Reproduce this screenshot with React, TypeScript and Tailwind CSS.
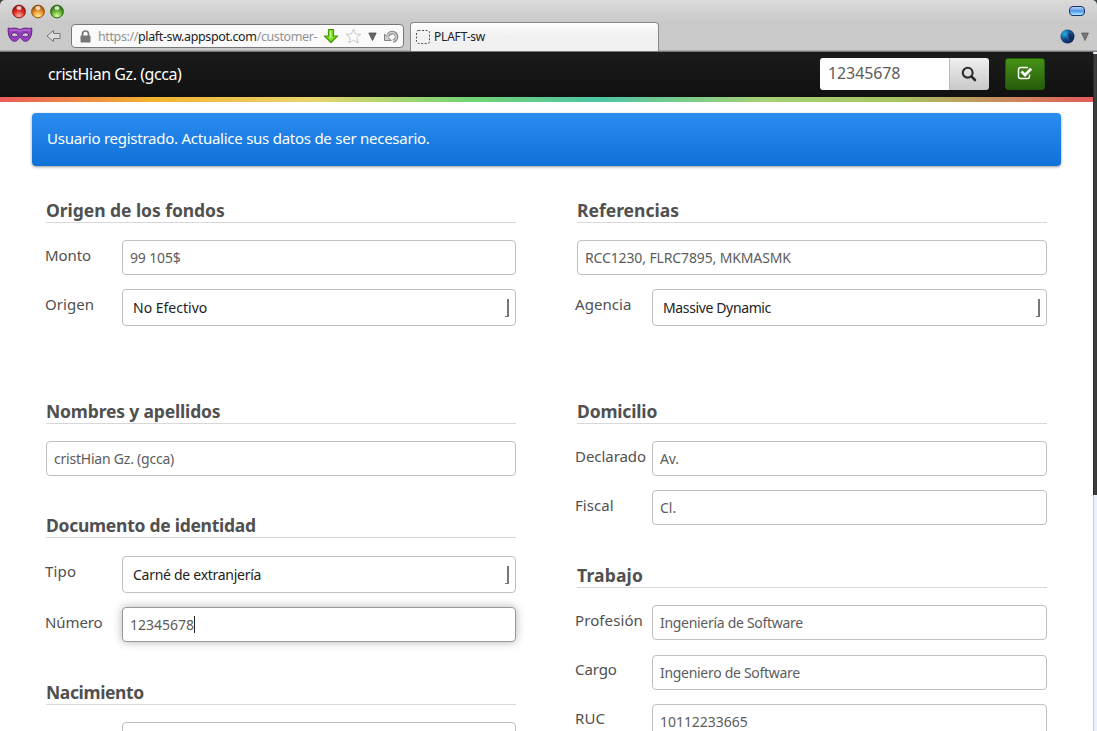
import type { ReactNode } from "react";

function Light({ id, dark, mid, light }: { id: string; dark: string; mid: string; light: string }) {
  return (
    <svg width="15" height="15" viewBox="0 0 15 15">
      <defs>
        <radialGradient id={id} cx="0.5" cy="0.85" r="0.75">
          <stop offset="0" stopColor={light} />
          <stop offset="0.55" stopColor={mid} />
          <stop offset="1" stopColor={dark} />
        </radialGradient>
      </defs>
      <circle cx="8" cy="7.5" r="6.4" fill={`url(#${id})`} stroke={dark} strokeWidth="1" />
      <ellipse cx="8" cy="4" rx="2.6" ry="1.9" fill="#fff" opacity="0.75" />
    </svg>
  );
}

function Mask() {
  return (
    <svg width="26" height="16" viewBox="0 0 26 16">
      <path
        d="M1.300 1C3 2 6 .8 9 1.200c1.700.2 2.500 1.300 4 1.300s2.300-1.100 4-1.300c3-.4 6 .8 7.700-.2.600 4-.2 8.500-2.700 11.500-2 2.300-5 2.300-6.700.3-1-1.300-1.500-2.300-2.300-2.300s-1.300 1-2.300 2.300c-1.700 2-4.700 2-6.700-.3C1.500 9.500.7 5 1.300 1z"
        fill="#9a3fc0"
        stroke="#5c2279"
        strokeWidth="1"
      />
      <path d="M2.500 3c4 .2 7-1.200 10.500 1.300C16.500 1.800 19.500 3.200 23.500 3" fill="none" stroke="#c67be0" strokeWidth="1" />
      <path d="M4.300 8c.7-3 5.500-3 7 .3-1.500 2-6 2.200-7-.3zM21.700 8c-.7-3-5.500-3-7 .3 1.500 2 6 2.200 7-.3z" fill="#cfc3d6" stroke="#4c1768" strokeWidth="1" />
    </svg>
  );
}

function Browser() {
  return (
    <header className="h-[52px] shrink-0 overflow-hidden rounded-t-[5px] border-b border-[#777] bg-[linear-gradient(#dadada,#c9c9c9_22px,#cacaca)] shadow-[inset_0_-1px_0_#aaa]">
      <div className="flex h-[22px] items-center pl-[11px] pr-[12px]">
        <div className="flex gap-[4px]">
          <Light id="lr" dark="#931510" mid="#dd332d" light="#ffb0a0" />
          <Light id="lo" dark="#965309" mid="#eb942d" light="#ffeb9e" />
          <Light id="lg" dark="#2f6812" mid="#62b331" light="#d6ff9e" />
        </div>
        <div className="ml-auto h-[10px] w-[16px] rounded-[4px] border border-[#1d2f73] bg-[linear-gradient(#b8d8fa,#4f92e6_50%,#a9f0ff)]" />
      </div>
      <div className="flex h-[30px] items-start">
        <div className="ml-[7px] mt-[5px]"><Mask /></div>
        <svg className="ml-[13px] mt-[7px]" width="15" height="14" viewBox="0 0 15 14">
          <path d="M1 7l6.500-5.500v3H14v5H7.500v3z" fill="#dedede" stroke="#777" />
        </svg>
        <div className="ml-[10px] mt-[2px] flex h-[24px] w-[333px] items-center rounded-[4px] border border-[#777] bg-[#fafafa] pl-[8px]">
          <svg className="shrink-0" width="11" height="13" viewBox="0 0 11 13">
            <path d="M2.500 6V4a3 3 0 0 1 6 0v2" fill="none" stroke="#777" strokeWidth="1.700" />
            <rect x="0.500" y="5.500" width="10" height="7" rx="1" fill="#777" />
          </svg>
          <span className="ml-[7px] w-[222px] shrink-0 whitespace-nowrap pt-px text-[12.500px] leading-[22px] tracking-[-0.380px] text-[#929292]">
            https://<span className="text-[#222]">plaft-sw.appspot.com</span>/customer-
          </span>
          <svg className="ml-[3px] shrink-0" width="16" height="16" viewBox="0 0 16 16">
            <path d="M5.500 1.500h5V8h4L8 14.500 1.500 8h4z" fill="#7be11d" stroke="#43950c" strokeWidth="1.200" strokeLinejoin="round" />
            <path d="M7.500 3v7" stroke="#c5ff7b" strokeWidth="1.500" />
          </svg>
          <svg className="ml-[6px] shrink-0" width="17" height="16" viewBox="0 0 17 16">
            <path d="M8.500 1l2 5 5.500.3-4.300 3.400 1.500 5.300-4.700-3-4.700 3 1.500-5.300L1 6.300 6.500 6z" fill="#fdfdfd" stroke="#c8c8c8" />
          </svg>
          <svg className="ml-[6px] shrink-0" width="9" height="9" viewBox="0 0 9 9">
            <path d="M.8 1h7.400L4.500 8.500z" fill="#666" stroke="#444" strokeWidth="0.700" />
          </svg>
          <svg className="ml-[7px] shrink-0" width="15" height="15" viewBox="0 0 15 15">
            <path d="M4 7.500A4.300 4.300 0 1 1 9 12" fill="none" stroke="#777" strokeWidth="3.400" />
            <path d="M.5 5.200v6.300h6.800z" fill="#d0d0d0" stroke="#777" strokeWidth="0.900" strokeLinejoin="round" />
            <path d="M3.800 8.500A4.300 4.300 0 1 1 9 12" fill="none" stroke="#cfcfcf" strokeWidth="1.800" />
          </svg>
        </div>
        <div className="ml-[6px] flex h-[30px] w-[249px] items-center rounded-t-[4px] border border-b-0 border-[#888] bg-[linear-gradient(#fff,#f1f1f1_12px)] pb-[2px] pl-[5px]">
          <svg width="14" height="14" viewBox="0 0 14 14">
            <rect x="0.500" y="0.500" width="13" height="13" rx="2" fill="none" stroke="#555" strokeDasharray="2 1.500" />
          </svg>
          <span className="ml-[4px] whitespace-nowrap text-[12px] tracking-[-0.200px] text-[#222]">PLAFT-sw</span>
        </div>
        <div className="ml-auto mr-[8px] mt-[7px] flex items-center gap-[6px]">
          <svg width="15" height="15" viewBox="0 0 15 15">
            <defs>
              <radialGradient id="globe" cx="0.300" cy="0.300" r="0.800">
                <stop offset="0" stopColor="#20afe3" />
                <stop offset="0.450" stopColor="#195998" />
                <stop offset="1" stopColor="#0c1d4d" />
              </radialGradient>
            </defs>
            <circle cx="7.500" cy="7.500" r="7" fill="url(#globe)" />
            <path d="M8 4l3 1 2 3-2 4-2-2zM4 9l3 2-1 2z" fill="#142454" opacity="0.700" />
          </svg>
          <svg width="8" height="9" viewBox="0 0 8 9">
            <path d="M.6 1h6.800L4 8.500z" fill="#777" stroke="#555" strokeWidth="0.700" />
          </svg>
        </div>
      </div>
    </header>
  );
}

function Section({ title, cls = "", tracking = "tracking-[0px]", children }: { title: string; cls?: string; tracking?: string; children: ReactNode }) {
  return (
    <section className={cls}>
      <h2 className={`h-[25px] whitespace-nowrap border-b border-[#d8d8d8] text-[17.500px] font-bold leading-[25px] text-[#505050] ${tracking}`}>{title}</h2>
      {children}
    </section>
  );
}

function Input({ value, focus, tracking = "tracking-[-0.300px]" }: { value: string; focus?: boolean; tracking?: string }) {
  return (
    <div
      className={`flex h-[35px] flex-1 items-center whitespace-nowrap rounded-[4px] border bg-white pl-[7px] text-[14px] text-[#5c5c5c] ${tracking} ${
        focus ? "border-[#999] shadow-[0_0_10px_rgba(0,0,0,0.300)]" : "border-[#bfbfbf]"
      }`}
    >
      <span>{value}</span>
      {focus && <span className="h-[17px] w-px bg-[#222]" />}
    </div>
  );
}

function Select({ value, tracking = "tracking-[-0.280px]" }: { value: string; tracking?: string }) {
  return (
    <div className={`flex h-[37px] flex-1 items-center whitespace-nowrap rounded-[4px] border border-[#bfbfbf] bg-white pl-[10px] pr-[6px] text-[14px] text-[#222] ${tracking}`}>
      <span>{value}</span>
      <span className="ml-auto h-[18px] w-[4px] border-b border-r-2 border-[#777]" />
    </div>
  );
}

function Row({
  label,
  cls,
  side = "left",
  pad = "pt-[4px]",
  tracking = "tracking-[0.050px]",
  children,
}: {
  label: string;
  cls: string;
  side?: "left" | "right";
  pad?: string;
  tracking?: string;
  children: ReactNode;
}) {
  return (
    <div className={`flex ${side === "left" ? "-ml-[1px]" : "-ml-[2px]"} ${cls}`}>
      <span className={`w-[77px] shrink-0 whitespace-nowrap text-[15px] leading-[22px] text-[#505050] ${pad} ${tracking}`}>{label}</span>
      {children}
    </div>
  );
}

export default function App() {
  return (
    <div className="h-[731px] w-[1097px] bg-[linear-gradient(#3a4440_10px,#fff_10px)]">
      <div className="flex h-[731px] w-[1097px] flex-col overflow-hidden font-['Noto_Sans','Open_Sans',sans-serif]">
        <Browser />
        <div className="flex min-h-0 flex-1">
          <main className="w-[1093px] overflow-hidden">
            <nav className="flex h-[45px] items-start bg-[linear-gradient(#1b1b1b,#111)] pl-[48px] pr-[48px]">
              <span className="whitespace-nowrap text-[16px] leading-[44px] tracking-[-0.450px] text-white">cristHian Gz. (gcca)</span>
              <div className="ml-auto mt-[6px] flex h-[32px] w-[169px] overflow-hidden rounded-[3px]">
                <div className="w-[129px] bg-white pl-[8px] text-[16px] leading-[31px] tracking-[-0.100px] text-[#5c5c5c]">12345678</div>
                <div className="flex flex-1 items-center justify-center border-l border-[#bbb] bg-[linear-gradient(#eee,#c9c9c9)] pr-px">
                  <svg width="16" height="16" viewBox="0 0 16 16">
                    <circle cx="6.700" cy="6.700" r="4.900" fill="none" stroke="#2b2b2b" strokeWidth="2.100" />
                    <path d="M10.300 10.300l3.700 3.700" stroke="#2b2b2b" strokeWidth="2.600" strokeLinecap="round" />
                  </svg>
                </div>
              </div>
              <div className="ml-[16px] mt-[6px] flex h-[32px] w-[40px] items-center justify-center rounded-[3px] border border-[#235c08] bg-[linear-gradient(#459216,#275c0b)]">
                <svg className="-mt-[2px]" width="16" height="14" viewBox="0 0 16 14">
                  <path d="M11 1.500H3.500a2 2 0 0 0-2 2v7a2 2 0 0 0 2 2h7a2 2 0 0 0 2-2V8.500" fill="none" stroke="#fff" strokeWidth="1.500" />
                  <path d="M4.500 5.500l3.500 3.500 6.200-6.200" fill="none" stroke="#fff" strokeWidth="2.700" />
                </svg>
              </div>
            </nav>
            <div className="h-[5px] bg-[linear-gradient(90deg,#eb5b5b,#f3b32e_14%,#e8d46b_28.500%,#71d374_43%,#4ec5a5_55%,#a4d173_70%,#a7c461_82%,#e55b5b)]" />
            <div className="ml-[32px] mt-[11px] h-[53px] w-[1029px] rounded-[4px] bg-[linear-gradient(#2b8cf0,#0f72d9)] pl-[15px] text-[15px] leading-[51px] tracking-[-0.250px] text-white shadow-[0_1px_3px_rgba(0,0,0,0.400)]">
              Usuario registrado. Actualice sus datos de ser necesario.
            </div>
            <div className="ml-[46px] mt-[32px] flex gap-[61px]">
              <div className="w-[470px]">
                <Section title="Origen de los fondos" tracking="tracking-[-0.050px]">
                  <Row label="Monto" cls="mt-[17px]" tracking="tracking-[-0.100px]"><Input value="99 105$" tracking="tracking-[-0.150px]" /></Row>
                  <Row label="Origen" cls="mt-[14px]"><Select value="No Efectivo" tracking="tracking-[0px]" /></Row>
                </Section>
                <Section title="Nombres y apellidos" cls="mt-[73px]" tracking="tracking-[-0.160px]">
                  <div className="mt-[17px] flex"><Input value="cristHian Gz. (gcca)" tracking="tracking-[-0.220px]" /></div>
                </Section>
                <Section title="Documento de identidad" cls="mt-[37px]" tracking="tracking-[-0.270px]">
                  <Row label="Tipo" cls="mt-[18px]" tracking="tracking-[0.200px]"><Select value="Carné de extranjería" /></Row>
                  <Row label="Número" cls="mt-[14px]" tracking="tracking-[-0.100px]"><Input value="12345678" focus tracking="tracking-[0px]" /></Row>
                </Section>
                <Section title="Nacimiento" cls="mt-[38px]" tracking="tracking-[-0.380px]">
                  <Row label="" cls="mt-[17px]"><Input value="" /></Row>
                </Section>
              </div>
              <div className="w-[470px]">
                <Section title="Referencias">
                  <div className="mt-[17px] flex"><Input value="RCC1230, FLRC7895, MKMASMK" tracking="tracking-[-0.130px]" /></div>
                  <Row side="right" label="Agencia" cls="mt-[14px]"><Select value="Massive Dynamic" tracking="tracking-[-0.370px]" /></Row>
                </Section>
                <Section title="Domicilio" cls="mt-[73px]" tracking="tracking-[-0.170px]">
                  <Row side="right" label="Declarado" cls="mt-[17px]" tracking="tracking-[-0.050px]"><Input value="Av." tracking="tracking-[-0.100px]" /></Row>
                  <Row side="right" label="Fiscal" cls="mt-[14px]"><Input value="Cl." tracking="tracking-[0px]" /></Row>
                </Section>
                <Section title="Trabajo" cls="mt-[38px]" tracking="tracking-[0.180px]">
                  <Row side="right" label="Profesión" cls="mt-[17px]" tracking="tracking-[0.100px]"><Input value="Ingeniería de Software" /></Row>
                  <Row side="right" label="Cargo" cls="mt-[15px]" pad="pt-[3px]" tracking="tracking-[-0.100px]"><Input value="Ingeniero de Software" /></Row>
                  <Row side="right" label="RUC" cls="mt-[14px]" pad="pt-[3px]"><Input value="10112233665" tracking="tracking-[-0.040px]" /></Row>
                </Section>
              </div>
            </div>
          </main>
          <div className="w-[4px] border-l border-[#c5ccd5] bg-[#eaf1fb]">
            <div className="-ml-px mt-[2px] h-[441px] w-[4px] bg-[linear-gradient(90deg,#222,#444_50%,#333)]" />
          </div>
        </div>
      </div>
    </div>
  );
}
